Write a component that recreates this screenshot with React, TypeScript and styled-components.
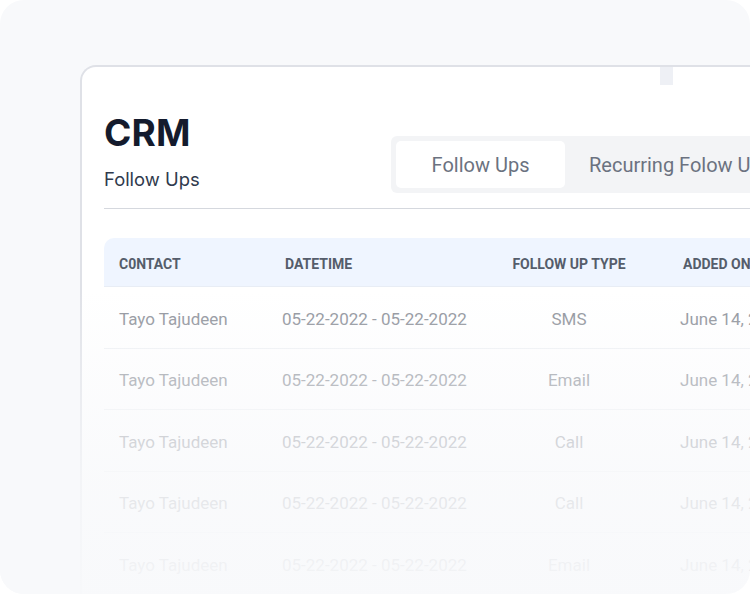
import React from "react";
import styled, { createGlobalStyle } from "styled-components";

const Global = createGlobalStyle`
  html, body { margin: 0; padding: 0; background: #ffffff; }
  * { box-sizing: border-box; }
`;

const Stage = styled.div`
  position: relative;
  width: 750px;
  height: 594px;
  border-radius: 24px;
  background: #f8f9fb;
  overflow: hidden;
  padding: 65px 0 0 80px;
`;

const Card = styled.div`
  position: relative;
  width: 700px;
  height: 560px;
  background: #ffffff;
  border: 2px solid #dfe1e7;
  border-right: none;
  border-bottom: none;
  border-radius: 16px 0 0 0;
  padding: 44px 0 0 22px;
`;

const ScrollThumb = styled.div`
  position: absolute;
  top: 0;
  left: 578px;
  width: 13px;
  height: 18px;
  background: #eef0f5;
`;

const TopBar = styled.div`
  display: flex;
  align-items: flex-start;
  gap: 192px;
  padding-bottom: 15px;
  border-bottom: 1px solid #d5d8de;
`;

const TitleBlock = styled.div`
  display: flex;
  flex-direction: column;
  flex: none;
  width: 95px;
`;

const Title = styled.h1`
  margin: 0;
  font-family: Inter, "Liberation Sans", sans-serif;
  font-weight: 700;
  font-size: 37px;
  line-height: 44px;
  color: #141b2d;
  letter-spacing: 0.2px;
`;

const Subtitle = styled.div`
  margin-top: 12px;
  font-family: Inter, "Liberation Sans", sans-serif;
  font-size: 18.4px;
  line-height: 24px;
  color: #2f3a4d;
  white-space: nowrap;
`;

const Tabs = styled.div`
  flex: none;
  display: flex;
  margin-top: 25px;
  padding: 5px;
  width: 380px;
  height: 57px;
  background: #f3f4f6;
  border-radius: 6px 0 0 6px;
  white-space: nowrap;
  overflow: hidden;
`;

const Tab = styled.div<{ $active?: boolean }>`
  flex: none;
  width: 169px;
  height: 47px;
  display: flex;
  align-items: center;
  justify-content: ${(p) => (p.$active ? "center" : "flex-start")};
  padding-left: ${(p) => (p.$active ? "0" : "24px")};
  background: ${(p) => (p.$active ? "#ffffff" : "transparent")};
  border-radius: 5px;
  font-family: Roboto, "Liberation Sans", sans-serif;
  font-size: 20px;
  color: #6b7280;
`;

const Table = styled.div`
  margin-top: 29px;
  display: flex;
  flex-direction: column;
`;

const HeadRow = styled.div`
  display: grid;
  grid-template-columns: 166px 224px 174px 1fr;
  align-items: center;
  height: 49px;
  padding: 3px 0 0 15px;
  background: #eff5ff;
  border-radius: 10px 0 0 0;
  border-bottom: 1px solid #e8edf5;
`;

const HeadCell = styled.div<{ $center?: boolean }>`
  width: ${(p) => (p.$center ? "120px" : "auto")};
  text-align: ${(p) => (p.$center ? "center" : "left")};
  font-family: Roboto, "Liberation Sans", sans-serif;
  font-weight: 700;
  font-size: 14px;
  color: #555d6b;
  white-space: nowrap;
`;

const Row = styled.div`
  display: grid;
  grid-template-columns: 166px 224px 174px 1fr;
  align-items: center;
  height: 61.5px;
  padding: 3px 0 0 15px;
  border-bottom: 1px solid #eef0f3;
`;

const Cell = styled.div<{ $center?: boolean }>`
  width: ${(p) => (p.$center ? "120px" : "auto")};
  text-align: ${(p) => (p.$center ? "center" : "left")};
  font-family: Roboto, "Liberation Sans", sans-serif;
  font-weight: 400;
  font-size: 17px;
  color: #8d9199;
  white-space: nowrap;
  margin-left: ${(p) => (p.$center ? "0" : "-3px")};
  &:first-child { margin-left: 0; }
`;

const Fade = styled.div`
  position: absolute;
  left: 0;
  right: 0;
  top: 290px;
  bottom: 0;
  pointer-events: none;
  background: linear-gradient(
    to bottom,
    rgba(248, 249, 251, 0) 0%,
    rgba(248, 249, 251, 0.4) 28%,
    rgba(248, 249, 251, 0.8) 62%,
    rgba(248, 249, 251, 0.97) 100%
  );
`;

const rows = [
  { name: "Tayo Tajudeen", date: "05-22-2022 - 05-22-2022", type: "SMS", added: "June 14, 2022" },
  { name: "Tayo Tajudeen", date: "05-22-2022 - 05-22-2022", type: "Email", added: "June 14, 2022" },
  { name: "Tayo Tajudeen", date: "05-22-2022 - 05-22-2022", type: "Call", added: "June 14, 2022" },
  { name: "Tayo Tajudeen", date: "05-22-2022 - 05-22-2022", type: "Call", added: "June 14, 2022" },
  { name: "Tayo Tajudeen", date: "05-22-2022 - 05-22-2022", type: "Email", added: "June 14, 2022" },
];

export default function App() {
  return (
    <>
      <Global />
      <Stage>
        <Card>
          <ScrollThumb />
          <TopBar>
            <TitleBlock>
              <Title>CRM</Title>
              <Subtitle>Follow Ups</Subtitle>
            </TitleBlock>
            <Tabs>
              <Tab $active>Follow Ups</Tab>
              <Tab>Recurring Folow Ups</Tab>
            </Tabs>
          </TopBar>
          <Table>
            <HeadRow>
              <HeadCell>C0NTACT</HeadCell>
              <HeadCell>DATETIME</HeadCell>
              <HeadCell $center>FOLLOW UP TYPE</HeadCell>
              <HeadCell>ADDED ON</HeadCell>
            </HeadRow>
            {rows.map((r, i) => (
              <Row key={i}>
                <Cell>{r.name}</Cell>
                <Cell>{r.date}</Cell>
                <Cell $center>{r.type}</Cell>
                <Cell>{r.added}</Cell>
              </Row>
            ))}
          </Table>
        </Card>
        <Fade />
      </Stage>
    </>
  );
}
